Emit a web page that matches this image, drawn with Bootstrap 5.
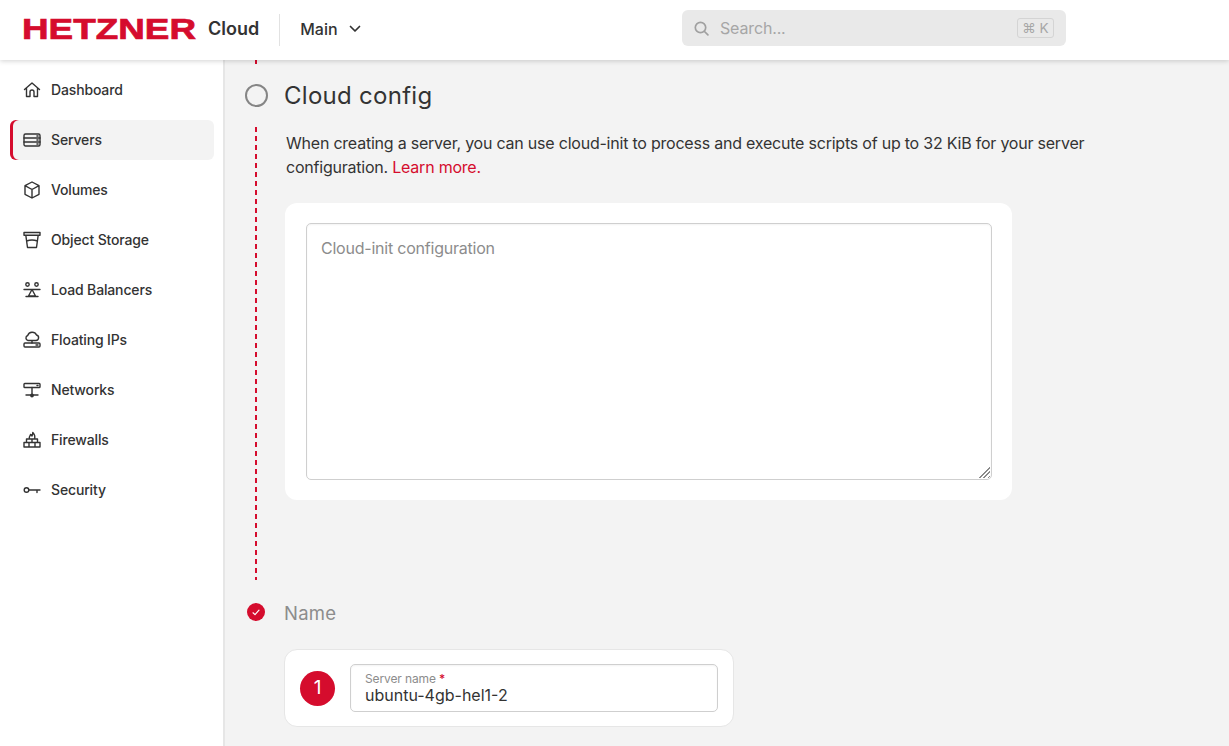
<!DOCTYPE html>
<html lang="en">
<head>
    <meta charset="UTF-8">
    <title>Hetzner Cloud</title>
    <link href="https://cdn.jsdelivr.net/npm/bootstrap@5.3.3/dist/css/bootstrap.min.css" rel="stylesheet">
    <style>
        html, body { height: 100%; }
        body { font-family: Inter, "Liberation Sans", sans-serif; color: #333; background: #f3f3f3; overflow: hidden; }
        .top-bar { height: 60px; background: #fff; box-shadow: 0 1px 5px rgba(0,0,0,.18); position: relative; z-index: 2; padding-left: 22px; }
        .logo-svg { width: 174px; height: 24px; display: block; overflow: visible; }
        .logo-svg text { font-family: "Liberation Sans", sans-serif; font-weight: 700; font-size: 29px; fill: #d50c2d; stroke: #d50c2d; stroke-width: .7px; }
        .logo-sub { font-size: 18px; font-weight: 600; margin-left: 12px; color: #333; padding-bottom: 3px; }
        .top-sep { width: 1px; height: 32px; background: #e2e2e2; margin: 0 20px; }
        .ctx-name { font-size: 16px; font-weight: 500; padding-bottom: 3px; }
        .ctx-arrow { margin: 0 0 2px 11px; }
        .search-box { position: absolute; left: 682px; top: 10px; width: 384px; height: 36px; background: #e9e9e9; border-radius: 6px; padding: 0 12px; color: #a6a6a6; font-size: 16px; }
        .search-box span.ph { margin-left: 11px; letter-spacing: -.15px; }
        .key-hint { margin-left: auto; font-size: 13.5px; border: 1px solid #d4d4d4; border-radius: 3px; padding: 0 4px; height: 20px; line-height: 18px; width: 37px; text-align: center; white-space: nowrap; }
        .page-wrap { height: 686px; }
        .side-nav { width: 225px; flex: none; background: #fff; border-right: 2px solid #e6e6e6; padding: 10px 10px 0; }
        .side-link { height: 40px; margin-bottom: 10px; padding: 0 0 2px 13px; gap: 10px; font-size: 14px; font-weight: 450; letter-spacing: -.15px; color: #333; text-decoration: none; border-radius: 6px; width: 204px; }
        .side-link.is-active { background: #f3f3f3; box-shadow: inset 3px 0 0 #d50c2d; }
        .side-link svg { width: 18px; height: 18px; margin-top: 2px; flex: none; fill: none; stroke: #333; stroke-width: 1.4; stroke-linecap: round; stroke-linejoin: round; }
        .main-area { flex: 1; min-width: 0; }
        .dash-line { width: 2px; margin-left: 30px; background: repeating-linear-gradient(to bottom, #d50c2d 0 5px, transparent 5px 9px); flex: none; }
        .dash-tail { height: 4px; }
        .step-head { padding-left: 20px; height: 63px; }
        .step-head.step-two { height: 64px; }
        .step-dot { width: 23px; margin-right: 16px; flex: none; }
        .step-ring { width: 23px; height: 23px; border: 2.5px solid #858585; border-radius: 50%; }
        .step-done { width: 18px; height: 18px; margin-left: 2px; border-radius: 50%; background: #d50c2d; }
        .step-title { font-family: Inter, "Liberation Sans", sans-serif; font-size: 24px; letter-spacing: .28px; margin: 0; padding-top: 2px; font-weight: 400; color: #333; }
        .step-title.is-muted { font-size: 18.5px; letter-spacing: .25px; color: #8c8c8c; }
        .step-body { height: 453px; }
        .step-content { margin-left: 29px; width: 800px; padding-top: 4px; }
        .intro-text { font-size: 16px; line-height: 24px; margin: 0 0 24px; letter-spacing: -.22px; }
        .intro-text a { color: #d50c2d; text-decoration: none; }
        .config-panel { width: 727px; height: 297px; margin-left: -1px; background: #fff; border-radius: 12px; padding: 20px 20px 20px 21px; border: 0; position: relative; }
        .config-panel::after { content: ""; position: absolute; right: 22px; bottom: 22px; width: 12px; height: 12px; background: repeating-linear-gradient(135deg, #8a8a8a 0 1px, transparent 1px 3px); clip-path: polygon(100% 0, 100% 100%, 0 100%); pointer-events: none; }
        .config-area { height: 257px; font-size: 16px; padding: 12px 14px; border: 1px solid #cfcfcf; border-radius: 5px; color: #333; font-family: inherit; letter-spacing: -.22px; resize: none; box-shadow: inset 0 1px 2px rgba(0,0,0,.05); }
        .config-area::placeholder { color: #8c8c8c; opacity: 1; }
        .name-panel { margin: 5px 0 0 59px; width: 450px; height: 78px; background: #fff; border: 1px solid #e6e6e6; border-radius: 13px; padding: 0 15px; }
        .num-badge { width: 35px; height: 35px; border-radius: 50%; background: #d50c2d; color: #fff; font-size: 19px; flex: none; margin-right: 15px; }
        .name-field { width: 368px; height: 48px; border: 1px solid #cfcfcf; border-radius: 5px; padding: 6px 14px 0; box-shadow: inset 0 1px 2px rgba(0,0,0,.05); }
        .name-label { font-size: 12px; line-height: 15px; letter-spacing: -.12px; color: #8c8c8c; display: block; margin: 0; }
        .name-label b { color: #d50c2d; font-weight: 500; }
        .name-input { border: 0; outline: 0; padding: 0; margin-top: -1px; width: 100%; font-size: 16px; line-height: 20px; height: 20px; color: #333; background: transparent; display: block; }
    </style>
</head>
<body>

    <header class="top-bar d-flex align-items-center">
        <svg class="logo-svg" viewBox="0 0 174 24" role="img" aria-label="Hetzner"><text x="0" y="21" textLength="174" lengthAdjust="spacingAndGlyphs">HETZNER</text></svg>
        <span class="logo-sub">Cloud</span>
        <span class="top-sep"></span>
        <span class="ctx-name">Main</span>
        <svg class="ctx-arrow" width="12" height="8" viewBox="0 0 12 8" fill="none" stroke="#333" stroke-width="1.7" stroke-linecap="round" stroke-linejoin="round"><path d="M1.5 1.5 6 6l4.5-4.5"/></svg>
        <div class="search-box d-flex align-items-center">
            <svg width="15" height="15" viewBox="0 0 15 15" fill="none" stroke="#a0a0a0" stroke-width="1.7" stroke-linecap="round"><circle cx="6.5" cy="6.5" r="5.2"/><path d="m10.5 10.5 3.4 3.4"/></svg>
            <span class="ph">Search...</span>
            <span class="key-hint">⌘ K</span>
        </div>
    </header>

    <div class="page-wrap d-flex">
        <nav class="side-nav">
            <a class="side-link d-flex align-items-center" href="#">
                <svg viewBox="0 0 18 18"><path d="M1.5 8.500 9 2l7.500 6.500M3.500 7v8.500h3.500V11a2 2 0 0 1 4 0v4.500h3.500V7"/></svg>Dashboard
            </a>
            <a class="side-link is-active d-flex align-items-center" href="#">
                <svg viewBox="0 0 18 18"><rect x="1" y="3" width="16" height="12" rx="1.500"/><path d="M1 7h16M1 11h16M14 5h1M14 9h1M14 13h1" stroke-width="1.600"/></svg>Servers
            </a>
            <a class="side-link d-flex align-items-center" href="#">
                <svg viewBox="0 0 18 18"><path d="M9 1 16 4.700v8.600L9 17l-7-3.700V4.700zM2 4.700l7 3.800 7-3.800M9 8.500V17"/></svg>Volumes
            </a>
            <a class="side-link d-flex align-items-center" href="#">
                <svg viewBox="0 0 18 18"><path d="M1 1.500h16v2.700H1zM2.800 4.200 4.500 16.500h9l1.700-12.300M3.600 10c3.600-1.400 7.200-1.400 10.800 0"/></svg>Object Storage
            </a>
            <a class="side-link d-flex align-items-center" href="#">
                <svg viewBox="0 0 18 18"><circle cx="4.500" cy="3.500" r="1.700"/><circle cx="13.500" cy="3.500" r="1.700"/><path d="M1 8.500h16M9 8.500l3.500 6.500h-7zM3 15.500h12"/></svg>Load Balancers
            </a>
            <a class="side-link d-flex align-items-center" href="#">
                <svg viewBox="0 0 18 18"><path d="M5 9.500h8a2.800 2.800 0 0 0 .5-5.500A4.700 4.700 0 0 0 4.700 4.500 2.600 2.600 0 0 0 5 9.500zM9 9.500V12"/><rect x="1" y="12" width="16" height="4" rx="1"/><path d="M13 14h2"/></svg>Floating IPs
            </a>
            <a class="side-link d-flex align-items-center" href="#">
                <svg viewBox="0 0 18 18"><rect x="1" y="2.500" width="16" height="4" rx=".8"/><path d="M9 6.500v8M3 14h12M14 4.500h1"/><circle cx="9" cy="14.500" r="1.200" fill="#333"/></svg>Networks
            </a>
            <a class="side-link d-flex align-items-center" href="#">
                <svg viewBox="0 0 18 18"><path d="M1 11.500h16V16H1zM3.500 8h11v3.500h-11zM6 11.500V16M12 11.500V16M9 8v3.500M6.500 8C5.500 5.500 7.500 5 7.500 3.500 8.500 4 8.500 4.500 9 5c.5-1 .8-2 .8-3.500 1.500 1.500 2.500 4 1.700 6.500"/></svg>Firewalls
            </a>
            <a class="side-link d-flex align-items-center" href="#">
                <svg viewBox="0 0 18 18"><circle cx="3.500" cy="9" r="2.300"/><path d="M5.800 9H17M14 9v2.500"/></svg>Security
            </a>
        </nav>

        <main class="main-area">
            <div class="dash-line dash-tail"></div>

            <div class="step-head d-flex align-items-center">
                <div class="step-dot"><div class="step-ring"></div></div>
                <h2 class="step-title">Cloud config</h2>
            </div>

            <div class="step-body d-flex">
                <div class="dash-line"></div>
                <div class="step-content">
                    <p class="intro-text">When creating a server, you can use cloud-init to process and execute scripts of up to 32 KiB for your server configuration. <a href="#">Learn more.</a></p>
                    <div class="config-panel card">
                        <textarea class="config-area form-control" placeholder="Cloud-init configuration"></textarea>
                    </div>
                </div>
            </div>

            <div class="step-head step-two d-flex align-items-center">
                <div class="step-dot d-flex">
                    <div class="step-done d-flex align-items-center justify-content-center">
                        <svg width="8" height="7" viewBox="0 0 8 7" fill="none" stroke="#fff" stroke-width="1.200" stroke-linecap="round" stroke-linejoin="round"><path d="M1 3.800 3 5.600 7 1.200"/></svg>
                    </div>
                </div>
                <h2 class="step-title is-muted">Name</h2>
            </div>

            <div class="name-panel d-flex align-items-center">
                <span class="num-badge d-flex align-items-center justify-content-center">1</span>
                <div class="name-field">
                    <label class="name-label" for="serverName">Server name <b>*</b></label>
                    <input class="name-input" id="serverName" type="text" value="ubuntu-4gb-hel1-2">
                </div>
            </div>
        </main>
    </div>

</body>
</html>
